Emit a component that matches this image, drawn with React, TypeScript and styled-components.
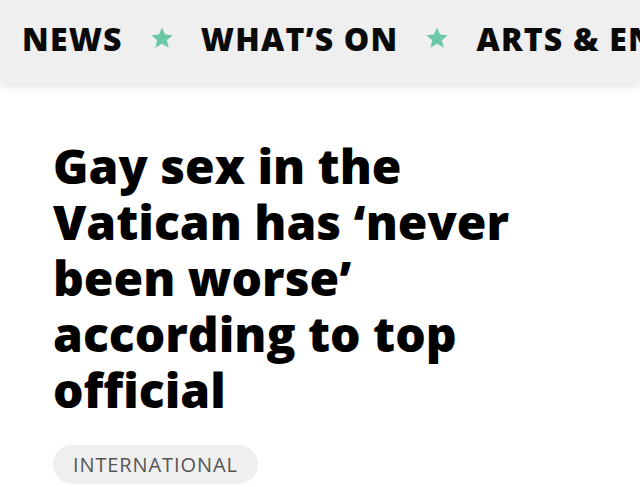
import React from 'react';
import styled, { createGlobalStyle } from 'styled-components';

const GlobalStyle = createGlobalStyle`
  html, body {
    margin: 0;
    padding: 0;
    background: #ffffff;
    overflow: hidden;
  }
  body {
    font-family: 'Open Sans', 'Liberation Sans', sans-serif;
  }
`;

const navItems = ['NEWS', 'WHAT’S ON', 'ARTS & ENTERTAINMENT'];

const headlineLines = [
  'Gay sex in the',
  'Vatican has ‘never',
  'been worse’',
  'according to top',
  'official',
];

const Star = () => (
  <StarIcon viewBox="0 0 24 24" aria-hidden="true">
    <path d="M12 1.5l3.1 7.1 7.6.6-5.8 5 1.8 7.5L12 17.8l-6.6 3.9 1.8-7.5-5.8-5 7.6-.6z" />
  </StarIcon>
);

const App: React.FC = () => {
  return (
    <Page>
      <GlobalStyle />
      <NavBar>
        {navItems.map((item, i) => (
          <React.Fragment key={item}>
            {i > 0 && <Star />}
            <NavLink>{item}</NavLink>
          </React.Fragment>
        ))}
      </NavBar>

      <Article>
        <Headline>
          {headlineLines.map((line) => (
            <HeadlineLine key={line}>{line}</HeadlineLine>
          ))}
        </Headline>
        <Tag>INTERNATIONAL</Tag>
      </Article>
    </Page>
  );
};

// Styles
const Page = styled.div`
  width: 640px;
  height: 487px;
  overflow: hidden;
  background: #ffffff;
`;

const NavBar = styled.nav`
  height: 84px;
  background: #efefef;
  box-shadow: 0 2px 8px rgba(0, 0, 0, 0.12);
  display: flex;
  align-items: center;
  gap: 27px;
  padding: 0 0 8px 22px;
  box-sizing: border-box;
  white-space: nowrap;
  overflow: hidden;
`;

const NavLink = styled.span`
  font-size: 32px;
  font-weight: 800;
  color: #0a0a0a;
  letter-spacing: 1.2px;
`;

const StarIcon = styled.svg`
  width: 24px;
  height: 24px;
  flex-shrink: 0;
  fill: #6cc7a5;
`;

const Article = styled.main`
  padding: 54px 0 0 53px;
`;

const Headline = styled.h1`
  margin: 0;
  font-size: 48px;
  line-height: 56px;
  font-weight: 800;
  color: #000000;
  white-space: nowrap;
`;

const HeadlineLine = styled.span`
  display: block;
`;

const Tag = styled.div`
  display: inline-flex;
  align-items: center;
  margin-top: 27px;
  height: 39px;
  padding: 0 20px;
  border-radius: 20px;
  background: #efefef;
  color: #555555;
  font-size: 20px;
  font-weight: 400;
  letter-spacing: 0.9px;
`;

export default App;
